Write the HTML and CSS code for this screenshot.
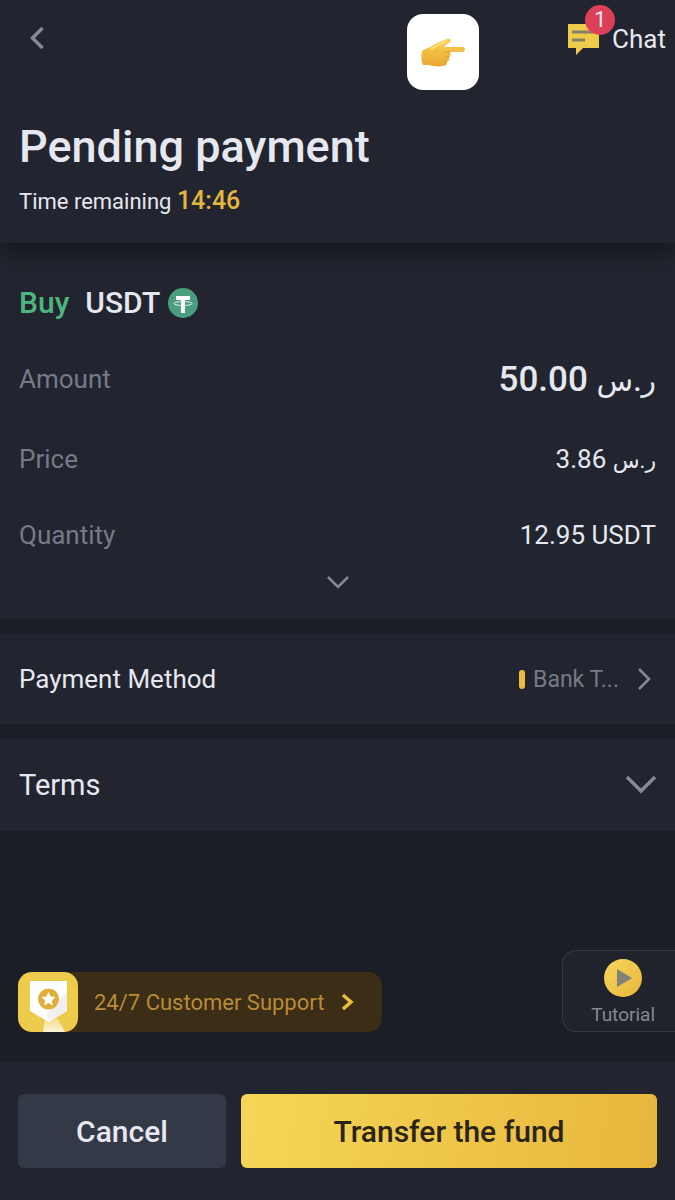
FILE: index.html
```html
<!DOCTYPE html>
<html lang="en">
<head>
    <meta charset="UTF-8">
    <meta name="viewport" content="width=device-width, initial-scale=1.0">
    <title>Pending payment</title>
    <link rel="stylesheet" href="styles.css">
</head>
<body>
    <header class="header">
        <div class="topbar">
            <a href="#" class="back" aria-label="Back">
                <svg width="16" height="24" viewBox="0 0 16 24"><path d="M13.5 2 3.5 12l10 10" fill="none" stroke="#858994" stroke-width="3.5"/></svg>
            </a>
            <div class="pointer">
                <svg width="46" height="32" viewBox="0 0 46 32">
                    <defs>
                        <linearGradient id="hand" x1="0" y1="0" x2="0" y2="1">
                            <stop offset="0" stop-color="#fbcf55"/>
                            <stop offset="1" stop-color="#eaa832"/>
                        </linearGradient>
                    </defs>
                    <path d="M2 15c2-2 7-3 10-5 4-3 9-5 15-7 4-1 5 2 2 4-2 1-4 2-5 4h18c4 0 4 5 0 5H30c1 2 1 4-1 5 1 2 0 4-2 5 0 3-2 4-4 4-6 1-11 0-14-1l-6 0c-2-4-2-10-1-14z" fill="url(#hand)"/>
                    <path d="M30 16h-6M29 21h-4M27 26h-4" fill="none" stroke="#dd9b31" stroke-width="1"/>
                    <path d="M11 13c5-3 9-5 15-8" fill="none" stroke="#ffdf80" stroke-width="2"/>
                </svg>
            </div>
            <a href="#" class="chat">
                <span class="chat-icon">
                    <svg width="33" height="32" viewBox="0 0 33 32">
                        <path d="M1 1h31v24H16l-7 7v-7H1z" fill="#eecb4b"/>
                        <path d="M5 9h21M5 17h13" stroke="#858166" stroke-width="3"/>
                    </svg>
                    <span class="badge">1</span>
                </span>
                Chat
            </a>
        </div>
        <h1>Pending payment</h1>
        <p class="time">Time remaining <strong>14:46</strong></p>
    </header>

    <main>
        <section class="order">
            <h2>
                <span class="buy">Buy</span> USDT
                <svg width="30" height="30" viewBox="0 0 30 30">
                    <circle cx="15" cy="15" r="15" fill="#4a9e7d"/>
                    <path d="M8 8h14v4h-5v13h-4V12H8z" fill="#fff"/>
                    <ellipse cx="15" cy="15.5" rx="9" ry="2" fill="none" stroke="#e8f4ef" stroke-width="1"/>
                </svg>
            </h2>
            <dl>
                <div class="row amount"><dt>Amount</dt><dd>50.00 <bdi lang="ar">ر.س</bdi></dd></div>
                <div class="row price"><dt>Price</dt><dd>3.86 <bdi lang="ar">ر.س</bdi></dd></div>
                <div class="row"><dt>Quantity</dt><dd>12.95 USDT</dd></div>
            </dl>
            <button type="button" class="expand" aria-label="Show more">
                <svg width="24" height="14" viewBox="0 0 24 14"><path d="M2 2l10 10L22 2" fill="none" stroke="#858994" stroke-width="2.5"/></svg>
            </button>
        </section>

        <a href="#" class="panel method">
            <span>Payment Method</span>
            <span class="bank">Bank T...</span>
            <svg width="14" height="24" viewBox="0 0 14 24"><path d="M2 2l10 10L2 22" fill="none" stroke="#858994" stroke-width="2.5"/></svg>
        </a>

        <button type="button" class="panel terms">
            <span>Terms</span>
            <svg width="32" height="20" viewBox="0 0 32 20"><path d="M2 2l14 14L30 2" fill="none" stroke="#858994" stroke-width="3.5"/></svg>
        </button>
    </main>

    <div class="help">
        <a href="#" class="support">
            <svg class="shield" width="60" height="60" viewBox="0 0 60 60">
                <defs>
                    <linearGradient id="beam" x1="0" y1="0" x2="0" y2="1">
                        <stop offset="0" stop-color="#fff" stop-opacity="0.1"/>
                        <stop offset="1" stop-color="#fff" stop-opacity="0.8"/>
                    </linearGradient>
                </defs>
                <rect width="60" height="60" rx="14" fill="#edcb4c"/>
                <path d="M12 9h37v30L30.5 50 12 39z" fill="#fff"/>
                <path d="M49 20v19L30.5 50 28 42z" fill="#f1f0ee"/>
                <path d="M28 40h8l11 20H25z" fill="url(#beam)"/>
                <circle cx="30.5" cy="27" r="10.5" fill="#e2ae3a"/>
                <path d="M30.5 20l2.100 4.500 4.900.6-3.600 3.400.9 4.900-4.300-2.400-4.300 2.400.9-4.900-3.600-3.400 4.900-.6z" fill="#fff"/>
            </svg>
            <span>24/7 Customer Support</span>
            <svg width="14" height="18" viewBox="0 0 14 18"><path d="M3 2l8 7-8 7" fill="none" stroke="#edbd3e" stroke-width="3.5"/></svg>
        </a>
        <a href="#" class="tutorial">
            <svg width="38" height="38" viewBox="0 0 38 38">
                <defs>
                    <linearGradient id="play" x1="0" y1="0" x2="1" y2="1">
                        <stop offset="0" stop-color="#f5d75a"/>
                        <stop offset="1" stop-color="#e7b63c"/>
                    </linearGradient>
                </defs>
                <circle cx="19" cy="19" r="19" fill="url(#play)"/>
                <path d="M13 10l15 9-15 9z" fill="#81807a"/>
            </svg>
            Tutorial
        </a>
    </div>

    <footer class="actions">
        <button type="button" class="cancel">Cancel</button>
        <button type="button" class="transfer">Transfer the fund</button>
    </footer>
</body>
</html>
```

FILE: styles.css
```css
* {
    box-sizing: border-box;
}
body {
    font-family: Roboto, "Noto Sans", "DejaVu Sans", sans-serif;
    background-color: #1b1e26;
    color: #e6e8f0;
    margin: 0;
    min-height: 100vh;
    display: flex;
    flex-direction: column;
}
h1, h2, p, dl, dd {
    margin: 0;
}
a {
    color: inherit;
    text-decoration: none;
}
button {
    font-family: inherit;
    color: inherit;
    border: none;
    cursor: pointer;
}
svg {
    display: block;
    flex-shrink: 0;
}
.header {
    background-color: #22252f;
    padding: 0 19px 26px;
    box-shadow: 0 8px 24px rgba(0,0,0,0.45);
    position: relative;
}
.topbar {
    display: flex;
    align-items: flex-start;
    padding-top: 14px;
    margin-right: -10px;
    height: 118px;
}
.back {
    padding: 12px 10px;
}
.pointer {
    display: flex;
    align-items: center;
    justify-content: center;
    width: 72px;
    height: 76px;
    margin-left: auto;
    margin-right: 88px;
    background-color: white;
    border-radius: 16px;
}
.chat {
    display: flex;
    align-items: center;
    gap: 12px;
    font-size: 26px;
    line-height: 32px;
    padding-top: 9px;
}
.chat-icon {
    position: relative;
}
.badge {
    position: absolute;
    left: 18px;
    top: -18px;
    width: 30px;
    height: 30px;
    border-radius: 50%;
    background-color: #dc4058;
    font-size: 22px;
    line-height: 30px;
    text-align: center;
}
h1 {
    font-size: 45px;
    line-height: 58px;
    font-weight: 500;
}
.time {
    font-size: 22px;
    line-height: 30px;
    margin-top: 10px;
}
.time strong {
    font-size: 25px;
    font-weight: 500;
    color: #e3b63e;
}
.order {
    background-color: #22252f;
    padding: 40px 19px 26px;
}
h2 {
    display: flex;
    align-items: center;
    gap: 8px;
    font-size: 30px;
    line-height: 40px;
    font-weight: 500;
}
.buy {
    color: #4eb57c;
    margin-right: 8px;
}
dl {
    margin-top: 32px;
}
.row {
    display: flex;
    align-items: center;
    justify-content: space-between;
    height: 72px;
    font-size: 26px;
}
.price {
    height: 80px;
}
.amount {
    height: 48px;
    margin-bottom: 16px;
}
dt {
    color: #767a86;
}
.amount dd {
    font-size: 35px;
    font-weight: 500;
}
.amount bdi {
    font-size: 30px;
}
.price bdi {
    font-size: 22px;
}
.expand {
    display: block;
    margin: 0 auto;
    padding: 4px;
    background: none;
}
.panel {
    display: flex;
    align-items: center;
    width: 100%;
    margin-top: 15px;
    padding: 0 24px 0 19px;
    background-color: #22252f;
    text-align: left;
}
.method {
    height: 90px;
    font-size: 26px;
}
.bank {
    display: flex;
    align-items: center;
    gap: 8px;
    margin-left: auto;
    margin-right: 18px;
    font-size: 23px;
    color: #767a86;
}
.bank::before {
    content: "";
    width: 6px;
    height: 19px;
    border-radius: 3px;
    background-color: #e9b940;
}
.terms {
    justify-content: space-between;
    height: 92px;
    padding-right: 18px;
    font-size: 29px;
}
.help {
    display: flex;
    align-items: flex-end;
    justify-content: space-between;
    margin-top: auto;
    padding: 24px 0 30px 18px;
}
.support {
    display: flex;
    align-items: center;
    padding-right: 28px;
    border-radius: 14px;
    background-color: #3b2d16;
    color: #b98b37;
    font-size: 22px;
    gap: 16px;
}
.tutorial {
    display: flex;
    flex-direction: column;
    align-items: center;
    gap: 6px;
    padding: 8px 20px 4px 28px;
    border: 1px solid #343844;
    border-right: none;
    border-radius: 14px 0 0 14px;
    background-color: #20232c;
    color: #858994;
    font-size: 19px;
    line-height: 24px;
}
.actions {
    display: grid;
    grid-template-columns: 1fr 2fr;
    gap: 15px;
    padding: 32px 18px;
    background-color: #22252f;
}
.actions button {
    height: 74px;
    padding: 0;
    border-radius: 6px;
    font-size: 30px;
    font-weight: 500;
}
.cancel {
    background-color: #343947;
}
.transfer {
    background: linear-gradient(100deg, #f5d657, #e7b63d);
    color: #2a2416;
}
```
